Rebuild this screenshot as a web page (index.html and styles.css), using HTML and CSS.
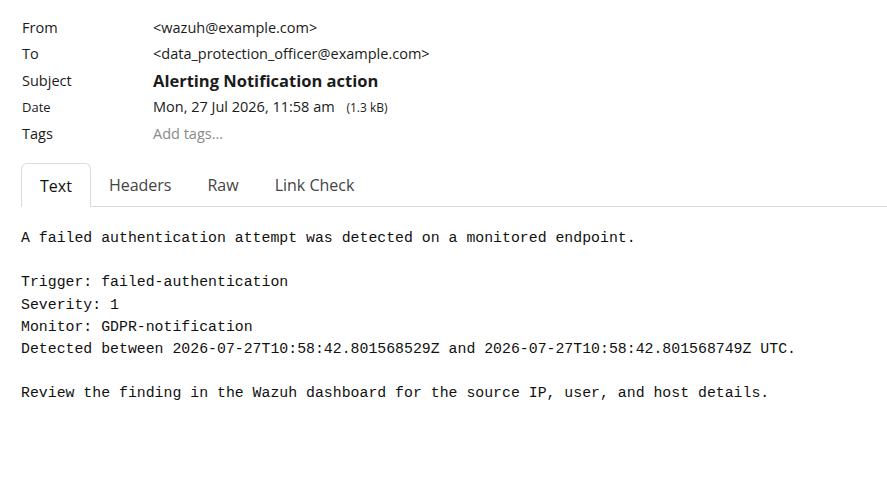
FILE: index.html
```html
<!DOCTYPE html>
<html lang="en">
<head>
    <meta charset="UTF-8">
    <meta name="viewport" content="width=device-width, initial-scale=1.0">
    <title>Alerting Notification action</title>
    <link rel="stylesheet" href="styles.css">
</head>
<body>
    <div class="message">
        <div class="headers">
            <div class="label">From</div>
            <div class="value">&lt;wazuh@example.com&gt;</div>

            <div class="label">To</div>
            <div class="value">&lt;data_protection_officer@example.com&gt;</div>

            <div class="label">Subject</div>
            <div class="value subject">Alerting Notification action</div>

            <div class="label small">Date</div>
            <div class="value">Mon, 27 Jul 2026, 11:58 am <span class="size">(1.3 kB)</span></div>

            <div class="label">Tags</div>
            <div class="value muted">Add tags...</div>
        </div>

        <div class="tabs">
            <div class="tab active">Text</div>
            <div class="tab">Headers</div>
            <div class="tab">Raw</div>
            <div class="tab">Link Check</div>
            <div class="tab-fill"></div>
        </div>

        <pre class="body-text">A failed authentication attempt was detected on a monitored endpoint.

Trigger: failed-authentication
Severity: 1
Monitor: GDPR-notification
Detected between 2026-07-27T10:58:42.801568529Z and 2026-07-27T10:58:42.801568749Z UTC.

Review the finding in the Wazuh dashboard for the source IP, user, and host details.</pre>
    </div>
</body>
</html>
```

FILE: styles.css
```css
body {
    font-family: "Open Sans", Arial, sans-serif;
    margin: 0;
    background-color: #ffffff;
    color: #1b1b1b;
}
.message {
    padding: 14px 0 0 21px;
}
.headers {
    display: grid;
    grid-template-columns: 132px 1fr;
    grid-auto-rows: 26.5px;
    align-items: center;
    font-size: 14.5px;
}
.label {
    padding-left: 1px;
}
.label.small {
    font-size: 13px;
}
.value {
    white-space: nowrap;
}
.subject {
    font-weight: bold;
    font-size: 16.5px;
}
.size {
    font-size: 12px;
    margin-left: 8px;
}
.muted {
    color: #8a8a8a;
}
.tabs {
    display: flex;
    margin-top: 16.5px;
    height: 44px;
}
.tab {
    padding: 0 18px;
    font-size: 16px;
    color: #444;
    display: flex;
    align-items: center;
    border-bottom: 1px solid #dcdcdc;
}
.tab.active {
    color: #111;
    border: 1px solid #dcdcdc;
    border-bottom: none;
    border-radius: 6px 6px 0 0;
}
.tab-fill {
    flex: 1;
    border-bottom: 1px solid #dcdcdc;
}
.body-text {
    font-family: "Liberation Mono", "Courier New", monospace;
    font-size: 14.85px;
    line-height: 22.2px;
    margin: 20px 0 0 0;
    color: #111;
}
```
